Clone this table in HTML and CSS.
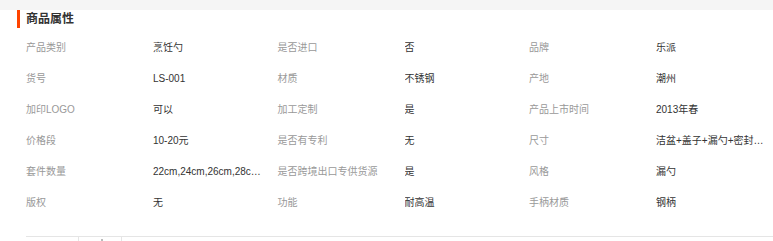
FILE: index.html
```html
<!DOCTYPE html>
<html lang="zh-CN">
<head>
<meta charset="utf-8">
<title>商品属性</title>
<link rel="stylesheet" href="styles.css">
</head>
<body>
<div class="band"></div>
<div class="attrs">
  <h2 class="title">商品属性</h2>
  <div class="grid">
    <div class="k">产品类别</div><div class="v">烹饪勺</div>
    <div class="k">是否进口</div><div class="v">否</div>
    <div class="k">品牌</div><div class="v">乐派</div>

    <div class="k">货号</div><div class="v">LS-001</div>
    <div class="k">材质</div><div class="v">不锈钢</div>
    <div class="k">产地</div><div class="v">潮州</div>

    <div class="k">加印LOGO</div><div class="v">可以</div>
    <div class="k">加工定制</div><div class="v">是</div>
    <div class="k">产品上市时间</div><div class="v">2013年春</div>

    <div class="k">价格段</div><div class="v">10-20元</div>
    <div class="k">是否有专利</div><div class="v">无</div>
    <div class="k">尺寸</div><div class="v">洁盆+盖子+漏勺+密封盖套装</div>

    <div class="k">套件数量</div><div class="v">22cm,24cm,26cm,28cm,30cm</div>
    <div class="k">是否跨境出口专供货源</div><div class="v">是</div>
    <div class="k">风格</div><div class="v">漏勺</div>

    <div class="k">版权</div><div class="v">无</div>
    <div class="k">功能</div><div class="v">耐高温</div>
    <div class="k">手柄材质</div><div class="v">钢柄</div>
  </div>
  <div class="tabs">
    <div class="tab first"></div>
    <div class="tab second"><span class="dot"></span></div>
  </div>
</div>
</body>
</html>
```
FILE: styles.css
```css
html, body {
  margin: 0;
  padding: 0;
  background: #fff;
}
body {
  font-family: "Liberation Sans", "Noto Sans CJK SC", sans-serif;
  overflow: hidden;
}
.band {
  height: 10px;
  background: #f5f5f5;
}
.attrs {
  padding-left: 17px;
}
.title {
  margin: 0;
  height: 18px;
  line-height: 18px;
  font-size: 12px;
  font-weight: bold;
  color: #333;
  border-left: 3px solid #ff4400;
  padding-left: 6px;
}
.grid {
  margin-top: 4px;
  margin-left: 9px;
  display: grid;
  grid-template-columns: 127px 124.5px 127px 124.5px 127px 124.5px;
  grid-auto-rows: 31px;
  font-size: 10px;
  line-height: 31px;
}
.k {
  color: #999;
  white-space: nowrap;
}
.v {
  color: #333;
  white-space: nowrap;
  overflow: hidden;
  text-overflow: ellipsis;
  max-width: 108px;
}
.tabs {
  margin-top: 18px;
  margin-left: 9px;
  border-top: 1px solid #e5e5e5;
  display: flex;
  height: 6px;
}
.tab {
  border-right: 1px solid #e5e5e5;
  position: relative;
}
.tab.first { width: 52px; }
.tab.second { width: 42px; }
.dot {
  position: absolute;
  left: 22px;
  top: 2px;
  width: 2px;
  height: 3px;
  background: #bbb;
}
```
